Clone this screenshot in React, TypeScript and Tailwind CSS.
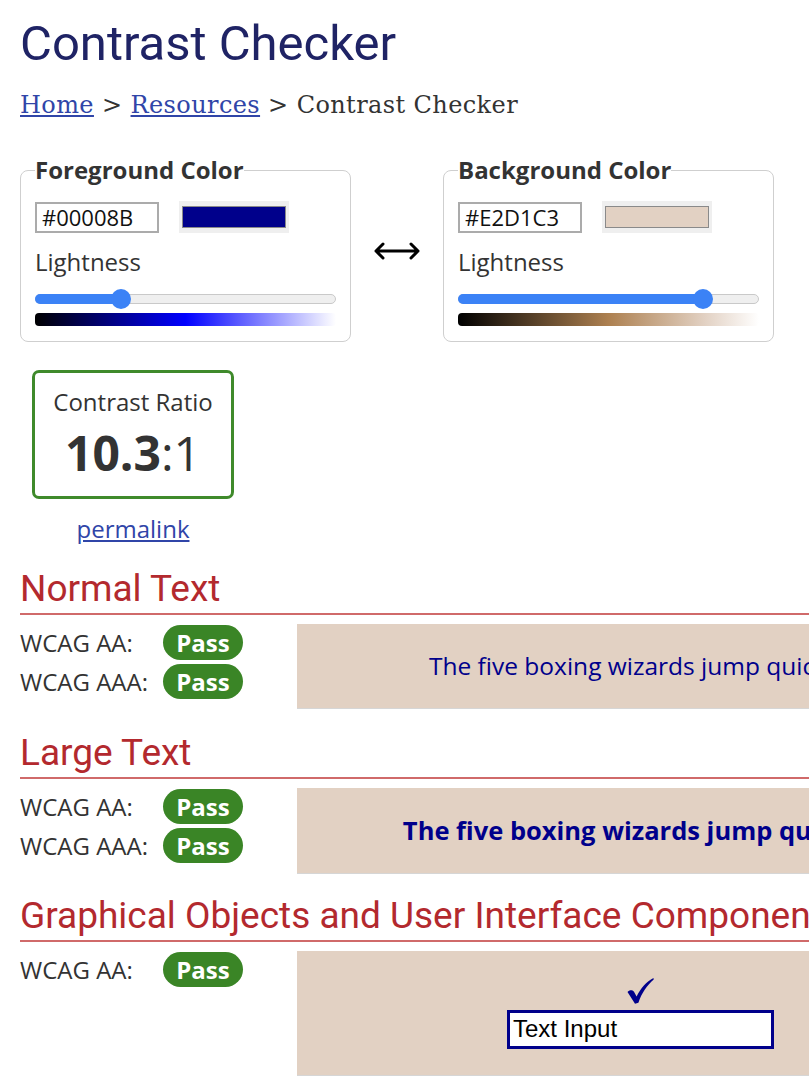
import React from "react";

// WebAIM風コントラストチェッカー
const NAVY_FG = "#00008B";
const SAMPLE_BG = "#E2D1C3";

const SANS = "font-['Open_Sans',sans-serif]";
const HEAD = "font-['Roboto',sans-serif]";

function Slider({ pct }: { pct: number }) {
  return (
    <div className="relative mt-[9px] h-[20px] w-full">
      <div className="absolute left-0 right-0 top-[5px] h-[10px] rounded-full border border-[#c9c9c9] bg-[#efefef]" />
      <div
        className="absolute left-0 top-[5px] h-[10px] rounded-full bg-[#3b82f6]"
        style={{ width: `${pct}%` }}
      />
      <div
        className="absolute top-0 h-[20px] w-[20px] -translate-x-1/2 rounded-full bg-[#3b82f6]"
        style={{ left: `${pct}%` }}
      />
    </div>
  );
}

function ColorBox({
  title,
  hex,
  pct,
  gradient,
}: {
  title: string;
  hex: string;
  pct: number;
  gradient: string;
}) {
  return (
    <fieldset className="w-[331px] rounded-lg border border-[#cfcfcf] px-[14px] pb-[15px]">
      <legend className="text-[24px] font-bold text-[#333]">{title}</legend>
      <div className="flex items-center pt-[13px]">
        <div className="flex h-[31px] w-[124px] items-center border-2 border-[#ababab] pl-[5px] text-[22px] text-[#111]">
          {hex}
        </div>
        <div className="ml-[20px] h-[32px] w-[110px] bg-[#efefef] px-[3px] py-[5px]">
          <div className="h-full w-full border border-[#8a8a8a]" style={{ background: hex }} />
        </div>
      </div>
      <div className="mt-[11px] text-[24px] text-[#333]">Lightness</div>
      <Slider pct={pct} />
      <div className="mt-[4px] h-[13px] w-full rounded-[4px]" style={{ background: gradient }} />
    </fieldset>
  );
}

function Pass() {
  return (
    <span className="inline-flex h-[35px] w-[80px] items-center justify-center rounded-full bg-[#3a8526] text-[24px] font-bold leading-none text-white">
      Pass
    </span>
  );
}

function Row({ label }: { label: string }) {
  return (
    <div className="flex h-[35px] items-center">
      <span className="w-[143px] text-[24px] leading-[35px] text-[#333]">{label}</span>
      <Pass />
    </div>
  );
}

function Section({
  title,
  labels,
  boxH,
  top = "mt-[22px]",
  children,
}: {
  title: string;
  labels: string[];
  boxH: string;
  top?: string;
  children: React.ReactNode;
}) {
  return (
    <section className={top}>
      <h2
        className={`${HEAD} border-b-2 border-[#d06a6a] pb-[2px] text-[37px] leading-[44px] text-[#b3292e] whitespace-nowrap`}
      >
        {title}
      </h2>
      <div className="mt-[9px] grid grid-cols-[277px_1fr]">
        <div className="flex flex-col gap-[4px] pt-[1px]">
          {labels.map((l) => (
            <Row key={l} label={l} />
          ))}
        </div>
        <div
          className={`flex flex-col items-center justify-center border-b border-[#d6d6d6] ${boxH}`}
          style={{ background: SAMPLE_BG }}
        >
          {children}
        </div>
      </div>
    </section>
  );
}

function Check() {
  return (
    <svg width="27" height="26" viewBox="0 0 27 26">
      <path
        d="M0.5 14 C2.5 11.8 5.2 11.8 7 13.8 L9.6 18.6 C13.5 10.2 19.5 3.6 26.5 0 L26.7 1.6 C20 7.4 15 14.6 11.4 24.8 L8 25.8 Z"
        fill={NAVY_FG}
      />
    </svg>
  );
}

export default function App() {
  return (
    <div className={`w-full overflow-hidden bg-white ${SANS}`}>
      <div className="w-[984px] pl-[20px] pb-[40px]">
        <h1 className={`${HEAD} pt-[14px] text-[49px] leading-[60px] text-[#1f2365]`}>
          Contrast Checker
        </h1>
        <nav className="mt-[16px] font-['DejaVu_Serif',serif] text-[24px] leading-[30px] tracking-[0.4px] text-[#333]">
          <a className="text-[#3045a8] underline">Home</a> &gt;{" "}
          <a className="text-[#3045a8] underline">Resources</a> &gt; Contrast Checker
        </nav>

        <div className="mt-[32px] flex items-center">
          <ColorBox
            title="Foreground Color"
            hex="#00008B"
            pct={28.7}
            gradient="linear-gradient(to right, #000 0%, #00008b 27%, #0000ff 50%, #ffffff 100%)"
          />
          <div className="flex w-[92px] justify-center pt-[8px]">
            <svg width="48" height="20" viewBox="0 0 48 20">
              <path
                d="M3 10 H45 M10 3 L3 10 L10 17 M38 3 L45 10 L38 17"
                fill="none"
                stroke="#000"
                strokeWidth="3"
                strokeLinecap="round"
                strokeLinejoin="round"
              />
            </svg>
          </div>
          <ColorBox
            title="Background Color"
            hex="#E2D1C3"
            pct={81.5}
            gradient="linear-gradient(to right, #000 0%, #ad8050 50%, #e2d1c3 82%, #ffffff 100%)"
          />
        </div>

        <div className="ml-[12px] mt-[28px] w-[202px]">
          <div className="flex h-[129px] flex-col items-center rounded-[7px] border-[3px] border-[#3f8a2b] pt-[11px]">
            <div className="text-[24px] text-[#333]">Contrast Ratio</div>
            <div className="text-[48px] leading-[65px] text-[#333]">
              <span className="font-bold">10.3</span>:1
            </div>
          </div>
          <div className="mt-[12px] text-center">
            <a className="text-[24px] text-[#3045a8] underline">permalink</a>
          </div>
        </div>

        <Section
          title="Normal Text"
          labels={["WCAG AA:", "WCAG AAA:"]}
          boxH="h-[85px]"
          top="mt-[20px]"
        >
          <p className="text-[24.5px]" style={{ color: NAVY_FG }}>
            The five boxing wizards jump quickly.
          </p>
        </Section>

        <Section title="Large Text" labels={["WCAG AA:", "WCAG AAA:"]} boxH="h-[86px]">
          <p className="text-[25.5px] font-bold" style={{ color: NAVY_FG }}>
            The five boxing wizards jump quickly.
          </p>
        </Section>

        <Section
          title="Graphical Objects and User Interface Components"
          labels={["WCAG AA:"]}
          boxH="h-[125px]"
          top="mt-[20px]"
        >
          <Check />
          <div className="mt-[6px] flex h-[39px] w-[267px] items-center border-[3px] border-[#00008B] bg-white pl-[3px] font-['Liberation_Sans',sans-serif] text-[24px] text-black">
            Text Input
          </div>
        </Section>
      </div>
    </div>
  );
}
